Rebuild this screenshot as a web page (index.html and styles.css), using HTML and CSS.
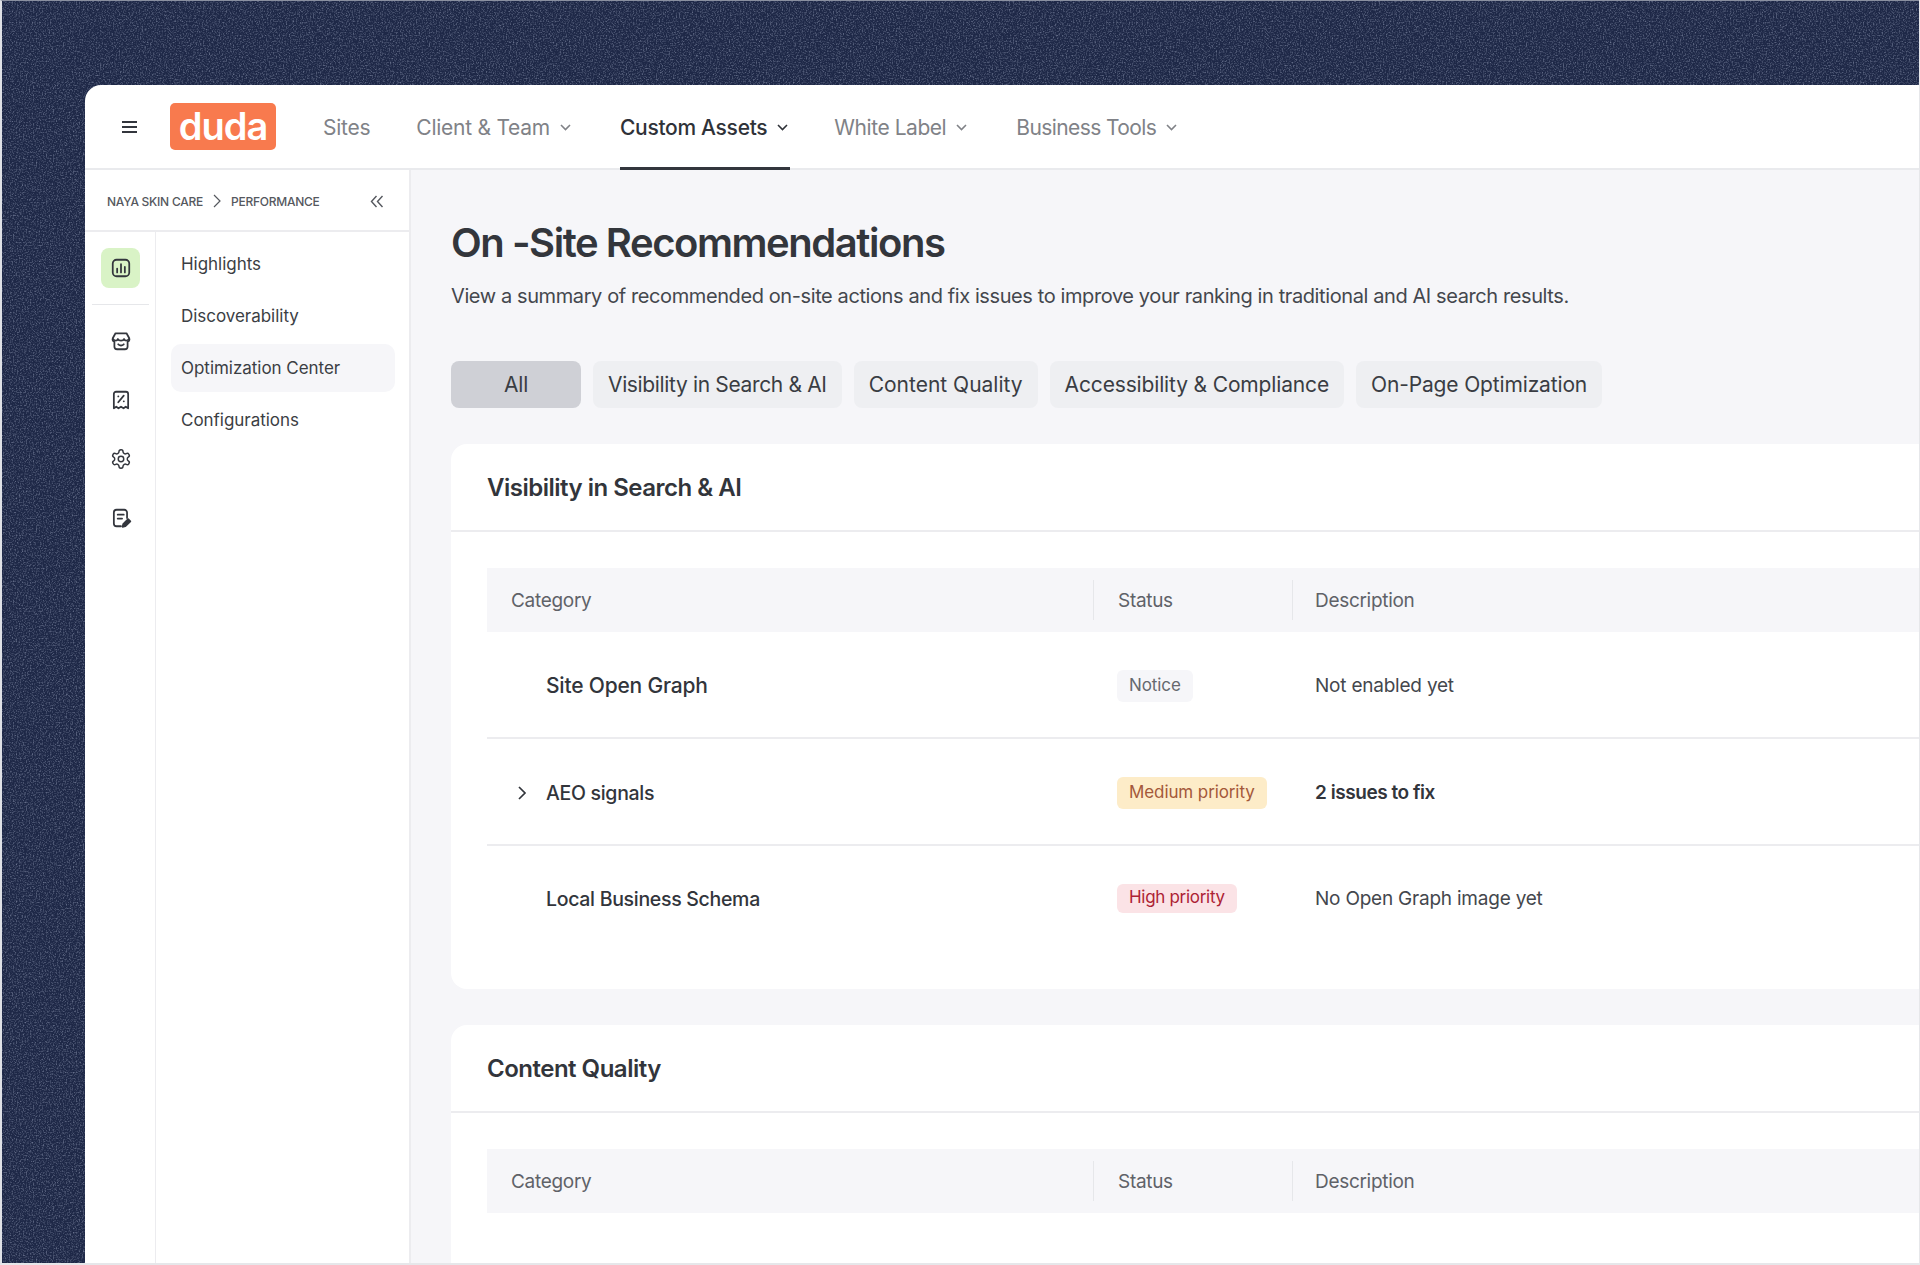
FILE: index.html
```html
<!DOCTYPE html>
<html lang="en">

<head>
  <meta charset="UTF-8">
  <meta name="viewport" content="width=device-width, initial-scale=1.0">
  <title>On-Site Recommendations</title>
  <link rel="stylesheet" href="styles.css">
</head>

<body>
  <div class="page">
    <!-- dark textured backdrop -->
    <svg class="backdrop" width="100%" height="100%" aria-hidden="true">
      <filter id="grain">
        <feTurbulence type="fractalNoise" baseFrequency="0.7" numOctaves="2" seed="4" />
        <feColorMatrix type="matrix" values="0 0 0 0 0.42  0 0 0 0 0.47  0 0 0 0 0.62  0 0 0 1.2 -0.55" />
      </filter>
      <rect width="100%" height="100%" filter="url(#grain)" />
    </svg>

    <div class="window">
      <header class="topbar">
        <svg class="burger" width="18" height="14" viewBox="0 0 18 14" fill="none" stroke="#33363d" stroke-width="2">
          <path d="M1 2h15M1 7h15M1 12h15" />
        </svg>
        <div class="logo">duda</div>
        <nav class="topnav">
          <a class="topnav-item">Sites</a>
          <a class="topnav-item">Client &amp; Team
            <svg class="caret" width="11" height="7" viewBox="0 0 11 7"><path d="M1 1l4.5 4.5L10 1" /></svg>
          </a>
          <a class="topnav-item active">Custom Assets
            <svg class="caret" width="11" height="7" viewBox="0 0 11 7"><path d="M1 1l4.5 4.5L10 1" /></svg>
          </a>
          <a class="topnav-item topnav-white">White Label
            <svg class="caret" width="11" height="7" viewBox="0 0 11 7"><path d="M1 1l4.5 4.5L10 1" /></svg>
          </a>
          <a class="topnav-item topnav-tools">Business Tools
            <svg class="caret" width="11" height="7" viewBox="0 0 11 7"><path d="M1 1l4.5 4.5L10 1" /></svg>
          </a>
        </nav>
      </header>

      <div class="workspace">
        <aside class="sidebar">
          <div class="crumbs">
            <span>Naya Skin Care</span>
            <svg class="crumb-sep" width="8" height="14" viewBox="0 0 8 14"><path d="M1 1l6 6-6 6" /></svg>
            <span>Performance</span>
            <svg class="collapse" width="14" height="13" viewBox="0 0 14 13"><path d="M6.5 1L1.5 6.5l5 5.5M12.5 1l-5 5.5 5 5.5" /></svg>
          </div>
          <div class="side-body">
            <div class="rail">
              <div class="rail-active">
                <svg class="rail-icon" width="22" height="22" viewBox="0 0 20 20">
                  <rect x="2.5" y="2.5" width="15" height="15" rx="3.5" />
                  <path d="M6.5 10.5V14M10 6.5V14M13.5 9v5" />
                </svg>
              </div>
              <div class="rail-sep"></div>
              <div class="rail-item">
                <svg class="rail-icon" width="22" height="22" viewBox="0 0 20 20">
                  <path d="M5 3h10l2.5 4.500a2.500 2.500 0 0 1-1.500 3.300V15a2.500 2.500 0 0 1-2.500 2.500h-7A2.500 2.500 0 0 1 4 15v-4.200a2.500 2.500 0 0 1-1.500-3.300z" />
                  <path d="M2.800 8.200c1.500 1.800 3.600 1.800 4.400 0 .8 1.800 4.800 1.800 5.600 0 .8 1.800 2.900 1.800 4.400 0M7.500 13c1.400 1.200 3.600 1.200 5 0" />
                </svg>
              </div>
              <div class="rail-item">
                <svg class="rail-icon" width="22" height="22" viewBox="0 0 20 20">
                  <path d="M3.500 4.500a2 2 0 0 1 2-2h9a2 2 0 0 1 2 2v13l-2.200-1.400-2 1.400-2.300-1.400-2.300 1.400-2-1.400-2.200 1.400z" />
                  <path d="M7.500 12l5-6M7.500 6.800h.1M12.500 11.200h.1" />
                </svg>
              </div>
              <div class="rail-item">
                <svg class="rail-icon" width="22" height="22" viewBox="0 0 24 24">
                  <path d="M12.220 2h-.44a2 2 0 0 0-2 2v.18a2 2 0 0 1-1 1.730l-.43.250a2 2 0 0 1-2 0l-.15-.08a2 2 0 0 0-2.730.730l-.22.380a2 2 0 0 0 .73 2.730l.15.100a2 2 0 0 1 1 1.720v.51a2 2 0 0 1-1 1.740l-.15.090a2 2 0 0 0-.73 2.730l.22.380a2 2 0 0 0 2.730.730l.15-.08a2 2 0 0 1 2 0l.43.250a2 2 0 0 1 1 1.730V20a2 2 0 0 0 2 2h.44a2 2 0 0 0 2-2v-.18a2 2 0 0 1 1-1.730l.43-.25a2 2 0 0 1 2 0l.15.080a2 2 0 0 0 2.730-.730l.22-.39a2 2 0 0 0-.73-2.730l-.15-.08a2 2 0 0 1-1-1.740v-.5a2 2 0 0 1 1-1.740l.15-.09a2 2 0 0 0 .73-2.730l-.22-.38a2 2 0 0 0-2.730-.73l-.15.080a2 2 0 0 1-2 0l-.43-.25a2 2 0 0 1-1-1.730V4a2 2 0 0 0-2-2z" />
                  <circle cx="12" cy="12" r="3" />
                </svg>
              </div>
              <div class="rail-item">
                <svg class="rail-icon" width="22" height="22" viewBox="0 0 20 20">
                  <path d="M10 17.500H6a2.500 2.500 0 0 1-2.500-2.500V5A2.500 2.500 0 0 1 6 2.500h7A2.500 2.500 0 0 1 15.500 5v5" />
                  <path d="M7 7h5.500M7 10.500h4" />
                  <path class="rail-fill" d="M11.500 18l.5-2.500 4.500-4.500 2 2-4.500 4.500z" />
                </svg>
              </div>
            </div>
            <nav class="sidenav">
              <a class="sidenav-item">Highlights</a>
              <a class="sidenav-item">Discoverability</a>
              <a class="sidenav-item active">Optimization Center</a>
              <a class="sidenav-item">Configurations</a>
            </nav>
          </div>
        </aside>

        <main class="content">
          <h1 class="title">On -Site Recommendations</h1>
          <p class="subtitle">View a summary of recommended on-site actions and fix issues to improve your ranking in traditional and AI search results.</p>

          <div class="tabs">
            <button class="tab tab-all active">All</button>
            <button class="tab tab-tight">Visibility in Search &amp; AI</button>
            <button class="tab tab-loose">Content Quality</button>
            <button class="tab">Accessibility &amp; Compliance</button>
            <button class="tab">On-Page Optimization</button>
          </div>

          <section class="card">
            <h2 class="card-title">Visibility in Search &amp; AI</h2>
            <div class="card-body">
              <div class="table-head">
                <div class="col-category">Category</div>
                <div class="col-status">Status</div>
                <div class="col-desc">Description</div>
              </div>
              <div class="table-row">
                <div class="row-name large">Site Open Graph</div>
                <div class="row-status"><span class="badge badge-notice">Notice</span></div>
                <div class="row-desc">Not enabled yet</div>
              </div>
              <div class="table-row">
                <div class="row-name">
                  <svg class="row-caret" width="10" height="15" viewBox="0 0 10 15"><path d="M2 1.500l6 6-6 6" /></svg>
                  AEO signals
                </div>
                <div class="row-status"><span class="badge badge-medium">Medium priority</span></div>
                <div class="row-desc strong">2 issues to fix</div>
              </div>
              <div class="table-row last">
                <div class="row-name">Local Business Schema</div>
                <div class="row-status"><span class="badge badge-high">High priority</span></div>
                <div class="row-desc">No Open Graph image yet</div>
              </div>
            </div>
          </section>

          <section class="card card-open">
            <h2 class="card-title">Content Quality</h2>
            <div class="card-body">
              <div class="table-head">
                <div class="col-category">Category</div>
                <div class="col-status">Status</div>
                <div class="col-desc">Description</div>
              </div>
            </div>
          </section>
        </main>
      </div>
    </div>
  </div>
</body>

</html>
```

FILE: styles.css
```css
* {
  box-sizing: border-box;
}

html,
body {
  margin: 0;
  padding: 0;
  height: 100%;
  overflow: hidden;
}

body {
  font-family: "Inter", "Liberation Sans", sans-serif;
  color: #32353b;
  background-color: #e6e7ea;
}

.page {
  position: relative;
  height: 1265px;
  margin-right: 1px;
  border-left: 2px solid #dfe1e6;
  border-top: 1px solid #8a90a0;
  border-bottom: 2px solid #e6e7ea;
  background-color: #1e2847;
  padding: 84px 0 0 83px;
  overflow: hidden;
}

.backdrop {
  position: absolute;
  top: 0;
  left: 0;
}

.window {
  position: relative;
  display: flex;
  flex-direction: column;
  height: 100%;
  background-color: #fff;
  border-radius: 16px 0 0 0;
  overflow: hidden;
}

/* top bar */
.topbar {
  display: flex;
  align-items: center;
  flex: none;
  height: 85px;
  border-bottom: 2px solid #e9eaed;
  padding-left: 36px;
}

.logo {
  width: 106px;
  height: 47px;
  margin-left: 31px;
  border-radius: 5px;
  background-color: #f87a4e;
  color: #fff;
  font-size: 38px;
  font-weight: 600;
  line-height: 46px;
  text-align: center;
  letter-spacing: -1px;
}

.topnav {
  display: flex;
  align-self: stretch;
  margin-left: 47px;
}

.topnav-item {
  display: flex;
  align-items: center;
  gap: 10px;
  height: 85px;
  margin-right: 46px;
  color: #808287;
  font-size: 21px;
  letter-spacing: -0.25px;
  white-space: nowrap;
}

.topnav-white {
  margin-right: 49px;
  letter-spacing: -0.45px;
}

.topnav-tools {
  letter-spacing: -0.6px;
}

.topnav-item.active {
  margin-left: 3px;
  margin-right: 44px;
  padding-top: 3px;
  padding-right: 2px;
  color: #2f3238;
  font-weight: 500;
  letter-spacing: -0.3px;
  border-bottom: 3px solid #33363d;
}

.caret {
  fill: none;
  stroke: currentColor;
  stroke-width: 1.6;
}

/* sidebar */
.workspace {
  display: flex;
  flex: 1;
  min-height: 0;
}

.sidebar {
  flex: none;
  width: 326px;
  border-right: 2px solid #ececef;
}

.crumbs {
  display: flex;
  align-items: center;
  height: 62px;
  padding: 2px 0 0 22px;
  border-bottom: 2px solid #ececef;
  color: #55585e;
  font-size: 12px;
  font-weight: 500;
  letter-spacing: -0.25px;
  text-transform: uppercase;
}

.crumb-sep {
  margin: 0 10px;
  fill: none;
  stroke: #55585e;
  stroke-width: 1.2;
}

.collapse {
  margin-left: 50px;
  fill: none;
  stroke: #55585e;
  stroke-width: 1.4;
}

.side-body {
  display: flex;
  height: 100%;
}

.rail {
  flex: none;
  width: 71px;
  padding-top: 16px;
  border-right: 1px solid #ececef;
}

.rail-active {
  display: flex;
  align-items: center;
  justify-content: center;
  width: 39px;
  height: 40px;
  margin-left: 16px;
  border-radius: 8px;
  background-color: #d9f3c6;
}

.rail-sep {
  height: 1px;
  margin: 16px 6px 6px 7px;
  background-color: #e6e7ea;
}

.rail-item {
  display: flex;
  align-items: center;
  justify-content: center;
  width: 71px;
  height: 59px;
}

.rail-icon {
  fill: none;
  stroke: #33363d;
  stroke-width: 1.6;
  stroke-linecap: round;
  stroke-linejoin: round;
}

.rail-fill {
  fill: #33363d;
}

.sidenav {
  flex: 1;
  padding: 8px 14px 0 15px;
}

.sidenav-item {
  display: flex;
  align-items: center;
  height: 48px;
  margin-bottom: 4px;
  padding-left: 10px;
  border-radius: 10px;
  font-size: 17px;
  letter-spacing: -0.03px;
  color: #3b3e44;
}

.sidenav-item.active {
  background-color: #f6f6f9;
}

/* main column */
.content {
  flex: 1;
  min-width: 0;
  padding: 49px 0 0 40px;
  background-color: #f6f6f9;
}

.title {
  margin: 0;
  font-size: 40px;
  font-weight: 600;
  line-height: 48px;
  letter-spacing: -1.45px;
  color: #33363c;
}

.subtitle {
  margin: 15px 0 0;
  font-size: 20px;
  line-height: 28px;
  letter-spacing: -0.4px;
  color: #44474d;
  white-space: nowrap;
}

.tabs {
  display: flex;
  gap: 12px;
  margin-top: 51px;
}

.tab {
  height: 47px;
  padding: 0 15px;
  border: none;
  border-radius: 8px;
  background-color: #eeeff2;
  color: #3a3d43;
  font-family: inherit;
  font-size: 21px;
  letter-spacing: -0.15px;
}

.tab-all {
  width: 130px;
}

.tab-tight {
  letter-spacing: -0.35px;
}

.tab-loose {
  letter-spacing: 0;
}

.tab.active {
  background-color: #cfd0d6;
}

.card {
  margin-top: 36px;
  background-color: #fff;
  border-radius: 16px 0 0 16px;
}

/* this card runs on past the bottom of the window */
.card-open {
  padding-bottom: 120px;
}

.card-title {
  margin: 0;
  padding: 1px 36px 0;
  height: 88px;
  border-bottom: 2px solid #ececef;
  font-size: 24px;
  font-weight: 600;
  line-height: 86px;
  letter-spacing: -0.5px;
  color: #32353b;
}

.card-body {
  padding: 36px 0 36px 36px;
}

.table-head,
.table-row {
  display: grid;
  grid-template-columns: 606px 199px 1fr;
  align-items: center;
}

.table-head {
  height: 64px;
  background-color: #f6f6f9;
  color: #5f6268;
  font-size: 19px;
  letter-spacing: -0.3px;
}

.col-category {
  padding-left: 24px;
}

.col-status {
  display: flex;
  align-items: center;
  height: 40px;
  padding-left: 24px;
  border-left: 1px solid #e6e7ea;
}

.col-desc {
  display: flex;
  align-items: center;
  height: 40px;
  padding-left: 22px;
  border-left: 1px solid #e6e7ea;
}

.table-row {
  height: 107px;
  padding-top: 2px;
  border-bottom: 2px solid #ececef;
  font-size: 19px;
}

.table-row.last {
  padding: 0 0 2px;
  border-bottom: none;
}

.row-name {
  position: relative;
  padding-left: 59px;
  font-weight: 500;
  font-size: 19.5px;
  letter-spacing: -0.3px;
  color: #32353b;
}

.row-name.large {
  font-size: 21px;
  letter-spacing: -0.2px;
}

.row-caret {
  position: absolute;
  top: 50%;
  left: 30px;
  transform: translateY(-50%);
  fill: none;
  stroke: #32353b;
  stroke-width: 1.7;
}

.row-status {
  padding-left: 24px;
}

.row-desc {
  padding-left: 23px;
  color: #44474d;
  letter-spacing: -0.22px;
}

.row-desc.strong {
  color: #32353b;
  font-weight: 600;
  letter-spacing: -0.45px;
}

.badge {
  display: inline-block;
  height: 32px;
  padding: 0 12px;
  border-radius: 6px;
  font-size: 17px;
  line-height: 31px;
  letter-spacing: -0.1px;
}

.badge-notice {
  background-color: #f6f6f9;
  color: #66696f;
}

.badge-medium {
  background-color: #fdecc8;
  color: #a4583a;
}

.badge-high {
  height: 29px;
  line-height: 27px;
  letter-spacing: -0.3px;
  background-color: #fbe3e6;
  color: #ad2234;
}
```
